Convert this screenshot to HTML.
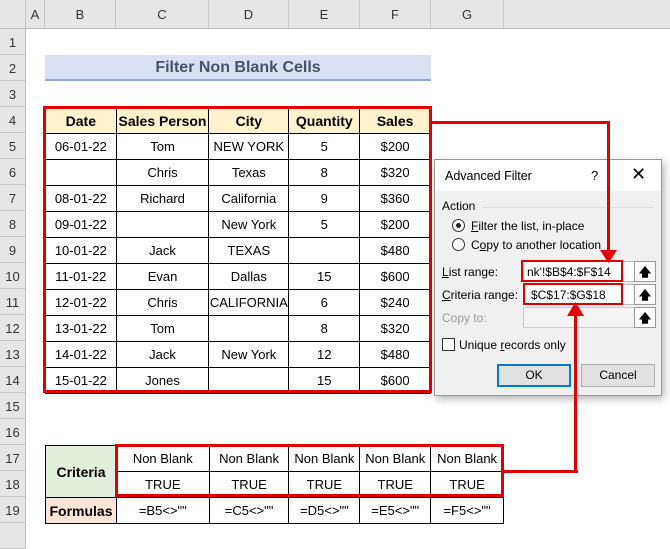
<!DOCTYPE html><html><head><style>
body{margin:0;width:670px;height:537px;overflow:hidden;background:#fff;font-family:"Liberation Sans",Calibri,sans-serif;position:relative}
.a{position:absolute;box-sizing:border-box}
.ch{top:0;height:29px;background:#e6e6e6;border-right:1px solid #c8c8c8;border-bottom:1px solid #bdbdbd;font-size:13px;color:#333;text-align:center;line-height:29px}
.rh{left:0;width:26px;height:26px;background:#e6e6e6;border-bottom:1px solid #c8c8c8;border-right:1px solid #bdbdbd;font-size:13px;color:#333;text-align:center;line-height:27px}
table{border-collapse:collapse;position:absolute;font-size:13px}
td{border:1px solid #000;text-align:center;padding:0;height:25px}
.h td{background:#fff2cc;font-weight:bold;font-size:14px}
.dl{font-size:12px;color:#000}
</style></head><body>
<div class="a ch" style="left:0;width:26px"></div>
<div class="a ch" style="left:26px;width:19px">A</div>
<div class="a ch" style="left:45px;width:71px">B</div>
<div class="a ch" style="left:116px;width:93px">C</div>
<div class="a ch" style="left:209px;width:80px">D</div>
<div class="a ch" style="left:289px;width:71px">E</div>
<div class="a ch" style="left:360px;width:71px">F</div>
<div class="a ch" style="left:431px;width:73px">G</div>
<div class="a ch" style="left:504px;width:166px;border-right:0"></div>
<div class="a rh" style="top:29px">1</div><div class="a rh" style="top:55px">2</div><div class="a rh" style="top:81px">3</div><div class="a rh" style="top:107px">4</div><div class="a rh" style="top:133px">5</div><div class="a rh" style="top:159px">6</div><div class="a rh" style="top:185px">7</div><div class="a rh" style="top:211px">8</div><div class="a rh" style="top:237px">9</div><div class="a rh" style="top:263px">10</div><div class="a rh" style="top:289px">11</div><div class="a rh" style="top:315px">12</div><div class="a rh" style="top:341px">13</div><div class="a rh" style="top:367px">14</div><div class="a rh" style="top:393px">15</div><div class="a rh" style="top:419px">16</div><div class="a rh" style="top:445px">17</div><div class="a rh" style="top:471px">18</div><div class="a rh" style="top:497px">19</div><div class="a rh" style="top:523px"></div>
<div class="a" style="left:45px;top:55px;width:386px;height:26px;background:#d9e1f2;border-bottom:2px solid #8ea9db;text-align:center;font-weight:bold;font-size:16px;color:#44546a;line-height:26px">Filter Non Blank Cells</div>
<table style="left:45px;top:107px;width:386px">
<colgroup><col style="width:71px"><col style="width:93px"><col style="width:80px"><col style="width:71px"><col style="width:71px"></colgroup>
<tr class="h"><td>Date</td><td>Sales Person</td><td>City</td><td>Quantity</td><td>Sales</td></tr>
<tr><td>06-01-22</td><td>Tom</td><td>NEW YORK</td><td>5</td><td>$200</td></tr>
<tr><td></td><td>Chris</td><td>Texas</td><td>8</td><td>$320</td></tr>
<tr><td>08-01-22</td><td>Richard</td><td>California</td><td>9</td><td>$360</td></tr>
<tr><td>09-01-22</td><td></td><td>New York</td><td>5</td><td>$200</td></tr>
<tr><td>10-01-22</td><td>Jack</td><td>TEXAS</td><td></td><td>$480</td></tr>
<tr><td>11-01-22</td><td>Evan</td><td>Dallas</td><td>15</td><td>$600</td></tr>
<tr><td>12-01-22</td><td>Chris</td><td>CALIFORNIA</td><td>6</td><td>$240</td></tr>
<tr><td>13-01-22</td><td>Tom</td><td></td><td>8</td><td>$320</td></tr>
<tr><td>14-01-22</td><td>Jack</td><td>New York</td><td>12</td><td>$480</td></tr>
<tr><td>15-01-22</td><td>Jones</td><td></td><td>15</td><td>$600</td></tr>
</table>
<div class="a" style="left:43px;top:106px;width:389px;height:287px;border:3px solid #e00000"></div>
<table style="left:45px;top:445px;width:459px">
<colgroup><col style="width:71px"><col style="width:93px"><col style="width:80px"><col style="width:71px"><col style="width:71px"><col style="width:73px"></colgroup>
<tr><td rowspan="2" style="background:#e2efda;font-weight:bold;font-size:14px">Criteria</td><td>Non Blank</td><td>Non Blank</td><td>Non Blank</td><td>Non Blank</td><td>Non Blank</td></tr>
<tr><td>TRUE</td><td>TRUE</td><td>TRUE</td><td>TRUE</td><td>TRUE</td></tr>
<tr><td style="background:#fce4d6;font-weight:bold;font-size:14px">Formulas</td><td>=B5&lt;&gt;""</td><td>=C5&lt;&gt;""</td><td>=D5&lt;&gt;""</td><td>=E5&lt;&gt;""</td><td>=F5&lt;&gt;""</td></tr>
</table>
<div class="a" style="left:115px;top:444px;width:389px;height:53px;border:3px solid #e00000"></div>
<!-- dialog -->
<div class="a" style="left:434px;top:159px;width:228px;height:237px;background:#f0f0f0;border:1px solid #999;box-shadow:2px 3px 8px rgba(0,0,0,.3)">
<div class="a" style="left:0;top:0;width:226px;height:31px;background:#fff"></div>
<div class="a dl" style="left:10px;top:9px;font-size:12.5px">Advanced Filter</div>
<div class="a dl" style="left:156px;top:8px;font-size:13px">?</div>
<div class="a dl" style="left:196px;top:4px;font-size:18px;font-weight:300">✕</div>
<div class="a dl" style="left:7px;top:39px">Action</div>
<div class="a" style="left:48px;top:47px;width:170px;height:1px;background:#ddd"></div>
<div class="a" style="left:17px;top:59px;width:13px;height:13px;border:1px solid #333;border-radius:50%;background:#fff"></div>
<div class="a" style="left:21px;top:63px;width:5px;height:5px;border-radius:50%;background:#222"></div>
<div class="a dl" style="left:36px;top:59px"><u>F</u>ilter the list, in-place</div>
<div class="a" style="left:17px;top:78px;width:13px;height:13px;border:1px solid #333;border-radius:50%;background:#fff"></div>
<div class="a dl" style="left:36px;top:78px">C<u>o</u>py to another location</div>
<div class="a dl" style="left:7px;top:105px"><u>L</u>ist range:</div>
<div class="a" style="left:88px;top:101px;width:116px;height:21px;background:#fff;border:1px solid #bbb"></div>
<div class="a dl" style="left:92px;top:105px">nk'!$B$4:$F$14</div>
<div class="a" style="left:86px;top:100px;width:102px;height:22px;border:2px solid #e00000"></div>
<div class="a" style="left:199px;top:101px;width:22px;height:21px;background:#fff;border:1px solid #999;text-align:center;font-size:12px;line-height:20px;font-weight:bold">🡅</div>
<div class="a dl" style="left:7px;top:128px"><u>C</u>riteria range:</div>
<div class="a" style="left:88px;top:124px;width:116px;height:21px;background:#fff;border:1px solid #bbb"></div>
<div class="a dl" style="left:96px;top:128px">$C$17:$G$18</div>
<div class="a" style="left:88px;top:123px;width:100px;height:22px;border:2px solid #e00000"></div>
<div class="a" style="left:199px;top:124px;width:22px;height:21px;background:#fff;border:1px solid #999;text-align:center;font-size:12px;line-height:20px;font-weight:bold">🡅</div>
<div class="a dl" style="left:7px;top:151px;color:#999">Copy to:</div>
<div class="a" style="left:88px;top:147px;width:116px;height:21px;background:#f4f4f4;border:1px solid #ccc"></div>
<div class="a" style="left:199px;top:147px;width:22px;height:21px;background:#fff;border:1px solid #999;text-align:center;font-size:12px;line-height:20px;font-weight:bold">🡅</div>
<div class="a" style="left:7px;top:178px;width:13px;height:13px;border:1px solid #333;background:#fff"></div>
<div class="a dl" style="left:24px;top:178px">Unique <u>r</u>ecords only</div>
<div class="a dl" style="left:62px;top:204px;width:74px;height:23px;border:2px solid #0078d7;background:#e1e1e1;text-align:center;line-height:19px">OK</div>
<div class="a dl" style="left:146px;top:204px;width:74px;height:23px;border:1px solid #adadad;background:#e1e1e1;text-align:center;line-height:21px">Cancel</div>
</div>
<!-- arrows -->
<div class="a" style="left:431px;top:121px;width:179px;height:3px;background:#e00000"></div>
<div class="a" style="left:607px;top:121px;width:3px;height:136px;background:#e00000"></div>
<svg class="a" style="left:600px;top:250px" width="17" height="14"><polygon points="0,0 17,0 8.5,13" fill="#e00000"/></svg>
<div class="a" style="left:504px;top:470px;width:74px;height:3px;background:#e00000"></div>
<div class="a" style="left:574px;top:312px;width:3px;height:161px;background:#e00000"></div>
<svg class="a" style="left:567px;top:302px" width="17" height="14"><polygon points="0,14 17,14 8.5,0" fill="#e00000"/></svg>
</body></html>
